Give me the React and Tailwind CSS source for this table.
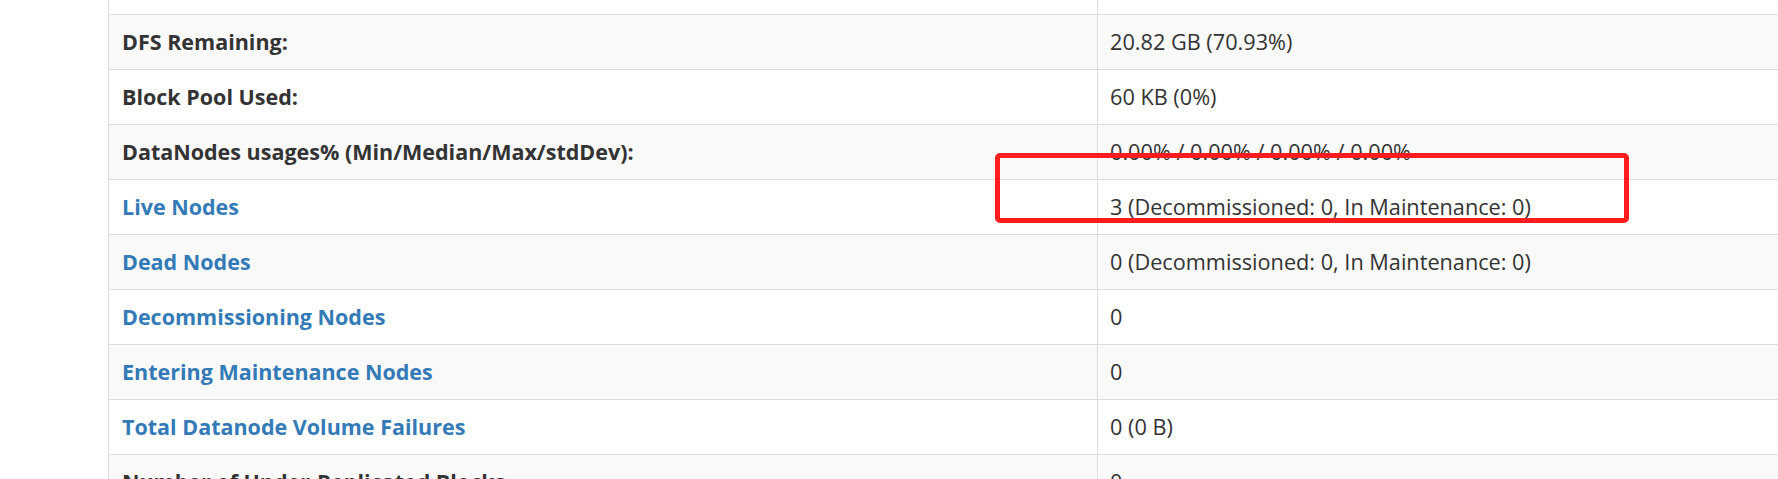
import React from "react";

const rows = [
  { label: "DFS Remaining:", value: "20.82 GB (70.93%)" },
  { label: "Block Pool Used:", value: "60 KB (0%)" },
  {
    label: "DataNodes usages% (Min/Median/Max/stdDev):",
    value: "0.00% / 0.00% / 0.00% / 0.00%",
  },
  { label: "Live Nodes", value: "3 (Decommissioned: 0, In Maintenance: 0)", link: true },
  { label: "Dead Nodes", value: "0 (Decommissioned: 0, In Maintenance: 0)", link: true },
  { label: "Decommissioning Nodes", value: "0", link: true },
  { label: "Entering Maintenance Nodes", value: "0", link: true },
  { label: "Total Datanode Volume Failures", value: "0 (0 B)", link: true },
  { label: "Number of Under-Replicated Blocks", value: "0" },
];

const App = () => {
  return (
    <div
      className="relative w-full h-[479px] overflow-hidden bg-white text-[#333]"
      style={{ fontFamily: '"Open Sans", "Noto Sans", sans-serif' }}
    >
      {/* Summary table */}
      <div className="ml-[108px] w-[1800px] border-l border-[#ddd]">
        {/* cut-off row above */}
        <div className="flex h-[14px]">
          <div className="w-[989px] shrink-0 border-r border-[#ddd]" />
          <div className="flex-1" />
        </div>

        {rows.map((row, i) => (
          <div
            key={row.label}
            className={`flex border-t border-[#ddd] leading-[30px] ${
              i % 2 === 0 ? "bg-[#f9f9f9]" : "bg-white"
            }`}
          >
            <div className="w-[989px] shrink-0 border-r border-[#ddd] px-[13px] py-[12px] text-[21.5px] font-bold">
              {row.link ? (
                <a href="#" className="text-[#337ab7] no-underline">
                  {row.label}
                </a>
              ) : (
                row.label
              )}
            </div>
            <div className="flex-1 px-[12px] py-[12px] text-[21.7px]">{row.value}</div>
          </div>
        ))}
      </div>

      {/* Red annotation box */}
      <div className="absolute left-[995px] top-[153px] w-[634px] h-[70px] border-[5px] border-[#fe1d1d] rounded-[5px]" />
    </div>
  );
};

export default App;
